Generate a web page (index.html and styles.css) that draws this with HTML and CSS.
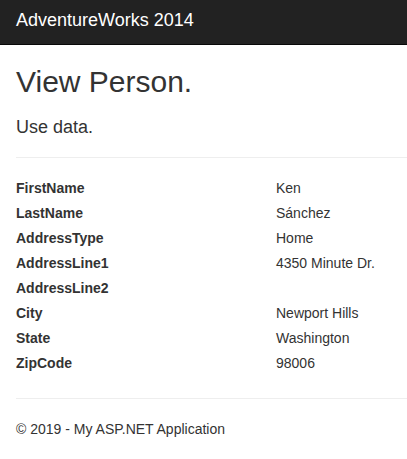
FILE: index.html
```html
<!DOCTYPE html>
<html lang="en">
<head>
<meta charset="utf-8">
<title>View Person</title>
<link rel="stylesheet" href="styles.css">
</head>
<body>
<header class="navbar">
  <a class="brand" href="#">AdventureWorks 2014</a>
</header>
<main class="content">
  <h2 class="title">View Person.</h2>
  <p class="lead">Use data.</p>
  <hr class="rule">
  <dl class="details">
    <div class="row"><dt>FirstName</dt><dd>Ken</dd></div>
    <div class="row"><dt>LastName</dt><dd>Sánchez</dd></div>
    <div class="row"><dt>AddressType</dt><dd>Home</dd></div>
    <div class="row"><dt>AddressLine1</dt><dd>4350 Minute Dr.</dd></div>
    <div class="row"><dt>AddressLine2</dt><dd></dd></div>
    <div class="row"><dt>City</dt><dd>Newport Hills</dd></div>
    <div class="row"><dt>State</dt><dd>Washington</dd></div>
    <div class="row"><dt>ZipCode</dt><dd>98006</dd></div>
  </dl>
  <hr class="rule footer-rule">
  <footer class="footer">
    <p>&copy; 2019 - My ASP.NET Application</p>
  </footer>
</main>
</body>
</html>
```
FILE: styles.css
```css
html, body {
  margin: 0;
  padding: 0;
  background: #fff;
}
body {
  font-family: "Liberation Sans", Arial, sans-serif;
  font-size: 14px;
  line-height: 20px;
  color: #333;
}
.navbar {
  height: 44px;
  background: #222;
  border-bottom: 1px solid #080808;
  display: flex;
  align-items: flex-start;
}
.brand {
  display: block;
  padding: 10px 16px 0 16px;
  font-size: 18px;
  line-height: 20px;
  color: #fff;
  text-decoration: none;
}
.content {
  padding: 0 0 0 16px;
}
.title {
  margin: 20px 0 0;
  font-size: 30px;
  line-height: 33px;
  font-weight: 400;
  color: #333;
}
.lead {
  margin: 19px 0 0;
  font-size: 18px;
  line-height: 20px;
}
.rule {
  margin: 20px 0 0;
  border: 0;
  border-top: 1px solid #eee;
  height: 0;
}
.details {
  margin: 18px 0 0;
}
.row {
  display: flex;
  height: 25px;
  line-height: 25px;
}
.row dt {
  width: 260px;
  font-weight: 700;
}
.row dd {
  margin: 0;
}
.footer-rule {
  margin-top: 22px;
}
.footer p {
  margin: 20px 0 0;
}
```
